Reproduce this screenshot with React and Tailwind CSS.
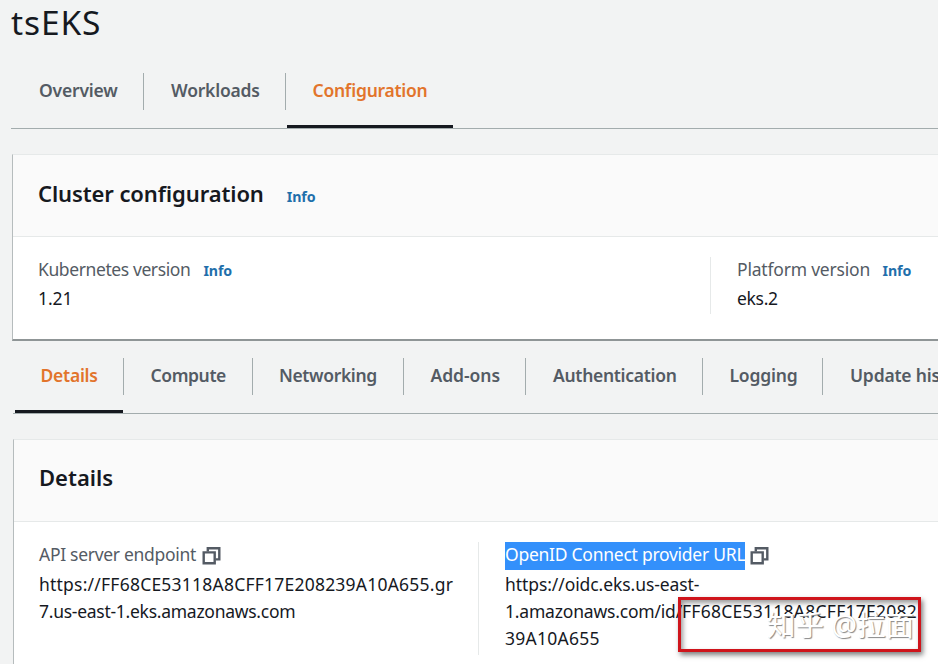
const CopyIcon = ({ className }) => (
  <svg className={className} width="19" height="19" viewBox="0 0 19 19" fill="none" stroke="#545b64" strokeWidth="2.4">
    <path d="M5.8 5.5V2.2h11.5v11.2h-3.8" />
    <path d="M1.7 6.4h11v10.9h-11z" />
  </svg>
);

const Tab = ({ label, active, last, box, text }) => (
  <div className={`flex shrink-0 flex-col ${box}`}>
    <div className={`h-[37px] ${last ? "" : "border-r border-[#a3acad]"}`}>
      <span className={`block leading-[35px] font-semibold whitespace-nowrap ${active ? "text-[#e2742b]" : "text-[#545b64]"} ${text}`}>
        {label}
      </span>
    </div>
    {active && <div className="mt-auto h-[3px] bg-[#16191f]" />}
  </div>
);

const Info = ({ className }) => (
  <a className={`text-[14.2px] font-bold tracking-[-0.1px] text-[#1f6fab] ${className}`}>Info</a>
);

export default function App() {
  return (
    <div className="h-[664px] w-[938px] overflow-hidden bg-[#f2f3f3] font-['Noto_Sans','Noto_Sans_CJK_SC',sans-serif] text-[17.5px] text-[#16191f] [font-feature-settings:'liga'_1]">
      <h1 className="h-[73px] pl-[11px] text-[33.5px] leading-[44px] tracking-[0.9px]">tsEKS</h1>

      <nav className="ml-[11px] flex h-[56px] border-b border-[#a3acad]">
        <Tab label="Overview" box="w-[133px]" text="pl-[28px] tracking-[-0.2px]" />
        <Tab label="Workloads" box="w-[142px]" text="pl-[27px] tracking-[-0.2px]" />
        <Tab label="Configuration" active last box="ml-px w-[166px]" text="pl-[25.5px] tracking-[-0.28px]" />
      </nav>

      <section className="mt-[25px] ml-3 h-[187px] border-t border-b-2 border-l border-t-[#e6e9e9] border-b-[#8f9596] border-l-[#b6bcbd] bg-white">
        <header className="flex h-[82px] items-baseline border-b border-[#e6e9e9] bg-[#fafafa] pl-[25px]">
          <h2 className="text-[22px] leading-[77px] font-semibold tracking-[-0.1px]">Cluster configuration</h2>
          <Info className="ml-[23px]" />
        </header>
        <div className="flex pt-[20px]">
          <div className="h-[57px] w-[698px] border-r border-[#e6e9e9] pl-[25px]">
            <div className="flex h-[26px] items-baseline leading-[25px]">
              <span className="tracking-[-0.4px] text-[#545b64]">Kubernetes version</span>
              <Info className="ml-[13px]" />
            </div>
            <div className="leading-[30px] tracking-[-0.1px]">1.21</div>
          </div>
          <div className="pl-[26px]">
            <div className="flex h-[26px] items-baseline leading-[25px]">
              <span className="tracking-[-0.2px] text-[#545b64]">Platform version</span>
              <Info className="ml-[12.5px]" />
            </div>
            <div className="leading-[30px] tracking-[-0.3px]">eks.2</div>
          </div>
        </div>
      </section>

      <nav className="mt-[17px] ml-[13px] flex h-[56px] overflow-hidden border-b border-[#a3acad]">
        <div className="flex w-[111px] shrink-0 flex-col">
          <div className="h-[37px] border-r border-[#a3acad]">
            <span className="block pl-[27.5px] leading-[35px] font-semibold tracking-[-0.25px] text-[#e2742b]">Details</span>
          </div>
          <div className="mt-auto mr-px ml-[2px] h-[3px] bg-[#16191f]" />
        </div>
        <Tab label="Compute" box="w-[129px]" text="pl-[26.5px] tracking-[-0.4px]" />
        <Tab label="Networking" box="w-[151px]" text="pl-[26px] tracking-[-0.37px]" />
        <Tab label="Add-ons" box="w-[122px]" text="pl-[26.5px] tracking-[-0.05px]" />
        <Tab label="Authentication" box="w-[177px]" text="pl-[27px] tracking-[-0.3px]" />
        <Tab label="Logging" box="w-[120px]" text="pl-[26.5px] tracking-[-0.2px]" />
        <Tab label="Update history" last box="w-[160px]" text="pl-[27px] tracking-[-0.2px]" />
      </nav>

      <section className="mt-[25px] ml-[13px] h-[240px] border-t border-l border-t-[#e6e9e9] border-l-[#b6bcbd] bg-white">
        <header className="h-[82px] border-b border-[#e6e9e9] bg-[#fafafa] pl-[25px]">
          <h2 className="text-[22px] leading-[75px] font-semibold tracking-[0px]">Details</h2>
        </header>
        <div className="flex pt-[20px]">
          <div className="h-[113px] w-[465px] border-r border-[#e6e9e9] pl-[25px] leading-[27px]">
            <div className="-mt-px flex h-[30px]">
              <span className="tracking-[-0.3px] text-[#545b64]">API server endpoint</span>
              <CopyIcon className="mt-[5px] ml-[6px]" />
            </div>
            <div className="whitespace-nowrap tracking-[0.22px]">https://FF68CE53118A8CFF17E208239A10A655.gr</div>
            <div className="whitespace-nowrap tracking-[-0.27px]">7.us-east-1.eks.amazonaws.com</div>
          </div>
          <div className="relative pl-[26px] leading-[27px]">
            <div className="-mt-px flex h-[30px]">
              <span className="mt-px h-[28px] w-[240px] bg-[#3390fb] leading-[25px] whitespace-nowrap tracking-[-0.26px] text-white">
                OpenID Connect provider URL
              </span>
              <CopyIcon className="mt-[5px] ml-[5px]" />
            </div>
            <div className="whitespace-nowrap tracking-[-0.08px]">https://oidc.eks.us-east-</div>
            <div className="whitespace-nowrap">
              <span className="tracking-[-0.19px]">1.amazonaws.com/id/</span>
              <span className="tracking-[0.25px]">FF68CE53118A8CFF17E2082</span>
            </div>
            <div className="tracking-[0.25px]">39A10A655</div>
            <div className="absolute top-[55px] left-[199px] h-[55px] w-[243px] border-[3px] border-[#cf141b] shadow-[2px_3px_5px_rgba(0,0,0,0.5),inset_2px_3px_5px_rgba(0,0,0,0.4)]" />
            <div className="absolute top-[63px] left-[288px] text-[28.5px] leading-[40px] whitespace-nowrap text-white [text-shadow:1px_1px_1px_#888]">
              知乎 @拉面
            </div>
          </div>
        </div>
      </section>
    </div>
  );
}
